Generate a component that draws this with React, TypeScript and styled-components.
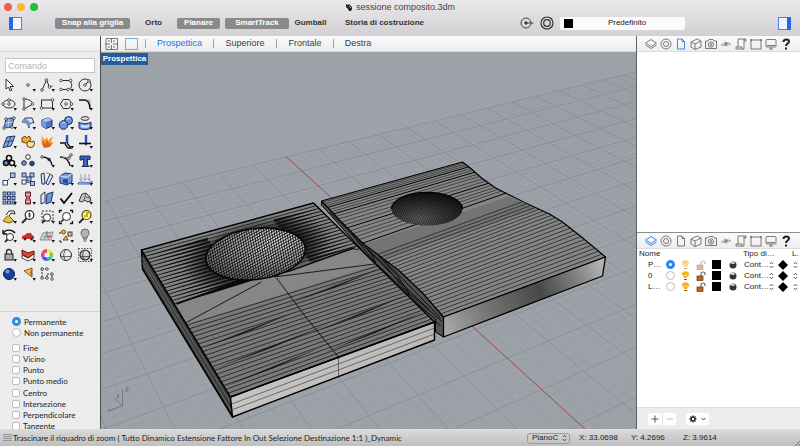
import React, { useState } from "react";
import styled, { createGlobalStyle, css } from "styled-components";

const GlobalStyle = createGlobalStyle`
  *, *::before, *::after { box-sizing: border-box; }
  html, body { margin: 0; padding: 0; }
  body, button, input, select, table {
    font-family: "Liberation Sans", Arial, Helvetica, sans-serif;
    font-size: 8px;
    line-height: 10px;
    color: #222;
  }
  button { border: 0; padding: 0; background: none; cursor: pointer; }
  svg { display: block; }
`;

/* ---------- window frame ---------- */

const Window = styled.div`
  display: flex;
  flex-direction: column;
  height: 100vh;
  min-height: 320px;
  overflow: hidden;
  background: #ececec;
`;

const Header = styled.header`
  flex: none;
  background: linear-gradient(#eae8ea, #d2d0d2);
`;

const TitleBar = styled.div`
  display: grid;
  grid-template-columns: 1fr auto 1fr;
  align-items: center;
  height: 14px;
  padding: 0 4px;
`;

const Lights = styled.div`
  display: flex;
  gap: 5px;
`;

const Light = styled.button<{ $color: string }>`
  width: 8px;
  height: 8px;
  border-radius: 50%;
  background: ${(p) => p.$color};
`;

const Title = styled.h1`
  display: flex;
  align-items: center;
  gap: 3px;
  margin: 0;
  font-size: 9px;
  font-weight: 400;
  color: #444;
`;

const Toolbar = styled.div`
  display: flex;
  align-items: center;
  height: 22px;
  padding: 0 9px 4px;
`;

const ModeGroup = styled.div`
  display: flex;
  flex: 1;
  gap: 5px;
  padding-left: 33px;
`;

const ModeButton = styled.button<{ $on?: boolean; $width: number }>`
  width: ${(p) => p.$width}px;
  height: 11px;
  border-radius: 2px;
  font-size: 8px;
  font-weight: 700;
  white-space: nowrap;
  color: #333;
  ${(p) => p.$on && css`
    color: #fff;
    background: #8b8a8b;
  `}
`;

const LayerPicker = styled.div`
  display: flex;
  align-items: center;
  gap: 6px;
  margin-right: 93px;
`;

const LayerField = styled.label`
  display: flex;
  align-items: center;
  width: 125px;
  height: 13px;
  padding: 0 4px;
  border-radius: 2px;
  background: #fbfbfb;
`;

const BareSelect = styled.select<{ $center?: boolean }>`
  appearance: none;
  flex: 1;
  min-width: 0;
  padding: 0;
  border: 0;
  background: none;
  outline: none;
  text-align: ${(p) => (p.$center ? "center" : "left")};
  text-align-last: ${(p) => (p.$center ? "center" : "left")};
`;

const Swatch = styled.span`
  display: block;
  width: 9px;
  height: 9px;
  background: #000;
`;

const Body = styled.main`
  display: grid;
  grid-template-columns: 100px minmax(0, 1fr) 163px;
  flex: 1;
  min-height: 0;
`;

/* ---------- left sidebar ---------- */

const Sidebar = styled.aside`
  display: flex;
  flex-direction: column;
  min-height: 0;
  overflow: hidden;
  background: #ececec;
`;

const StripSpacer = styled.div`
  flex: none;
  height: 16px;
  background: linear-gradient(#fbfbfb, #eeeeee);
  border-bottom: 1px solid #d6d6d6;
`;

const CommandInput = styled.input`
  flex: none;
  height: 15px;
  margin: 6px 5px 3px;
  padding: 0 2px;
  border: 1px solid #c6c6c6;
  border-radius: 0;
  background: #fff;
  font-size: 9px;
  outline: none;
  &::placeholder { color: #b4b4b4; }
`;

const ToolGrid = styled.div`
  flex: none;
  display: grid;
  grid-template-columns: repeat(5, 1fr);
  grid-auto-rows: 1fr;
  width: 94px;
  height: 207px;
`;

const ToolButton = styled.button`
  display: grid;
  place-items: center;
`;

const SnapPanel = styled.section`
  flex: 1;
  min-height: 0;
  margin-top: 28px;
  padding: 4px 0 0 12px;
  border-top: 1px solid #d4d4d4;
  overflow: hidden;
`;

const OptionGroup = styled.fieldset<{ $height: number }>`
  display: grid;
  grid-auto-rows: 1fr;
  height: ${(p) => p.$height}px;
  margin: 0 0 4px;
  padding: 0;
  border: 0;
`;

const OptionLabel = styled.label`
  display: flex;
  align-items: center;
  gap: 3px;
  font-family: Lato, "Liberation Sans", sans-serif;
  white-space: nowrap;
`;

const Radio = styled.input`
  appearance: none;
  width: 9px;
  height: 9px;
  margin: 0;
  border: 1px solid #bcbcbc;
  border-radius: 50%;
  background: #fff;
  &:checked {
    border: 3px solid #3087ee;
  }
`;

const Check = styled.input`
  appearance: none;
  width: 8px;
  height: 8px;
  margin: 0;
  border: 1px solid #bdbdbd;
  border-radius: 2px;
  background: #fff;
  &:checked { background: #3087ee; }
`;

/* ---------- viewport ---------- */

const ViewArea = styled.section`
  display: flex;
  flex-direction: column;
  min-width: 0;
  min-height: 0;
  border-left: 1px solid #4d4d4d;
  border-right: 1px solid #5d6062;
`;

const ViewTabs = styled.nav`
  flex: none;
  display: flex;
  align-items: center;
  height: 16px;
  padding-left: 4px;
  border-bottom: 1px solid #d9d9d9;
  background: linear-gradient(#fbfbfb, #ececec);
`;

const LayoutButton = styled.button`
  margin-right: 7px;
`;

const ViewTab = styled.button<{ $width: number; $active?: boolean }>`
  width: ${(p) => p.$width}px;
  height: 9px;
  border-left: 1px solid #a2a2a2;
  font-size: 9px;
  line-height: 9px;
  color: ${(p) => (p.$active ? "#2272e6" : "#3a3a3a")};
`;

const Canvas = styled.div`
  position: relative;
  flex: 1;
  min-height: 0;
  background: #9da2a9;
  overflow: hidden;
`;

const ViewLabel = styled.button`
  position: absolute;
  top: 1px;
  left: 0;
  width: 47px;
  height: 12px;
  background: #235c96;
  color: #fff;
  font-weight: 700;
`;

/* ---------- right panels ---------- */

const Panels = styled.aside`
  display: flex;
  flex-direction: column;
  min-height: 0;
  background: #fff;
`;

const Panel = styled.section`
  flex: 1;
  display: flex;
  flex-direction: column;
  min-height: 0;
  & + & { border-top: 1px solid #8e8e8e; }
`;

const PanelTabs = styled.nav`
  flex: none;
  display: flex;
  align-items: center;
  height: 16px;
  padding-left: 6px;
  border-bottom: 1px solid #dcdcdc;
  background: linear-gradient(#fafafa, #eeeeee);
`;

const PanelTab = styled.button<{ $active?: boolean }>`
  display: grid;
  place-items: center;
  width: 15px;
  height: 14px;
  color: ${(p) => (p.$active ? "#2a7bf0" : "#6b6b6b")};
`;

const LayerTable = styled.table`
  width: 100%;
  table-layout: fixed;
  border-collapse: collapse;
  th, td {
    height: 11px;
    padding: 0;
    font-weight: 400;
    text-align: left;
    white-space: nowrap;
  }
  th { height: 10px; padding-left: 2px; }
  td > svg, td > input, td > span { margin: 0 auto; }
  td > input { display: block; }
`;

const NameCell = styled.td`
  && { padding-left: 11px; }
`;

const TypeField = styled.label`
  display: flex;
  align-items: center;
  padding: 0 2px 0 3px;
`;

const PanelBody = styled.div`
  flex: 1;
  min-height: 0;
`;

const PanelFooter = styled.footer`
  flex: none;
  display: flex;
  align-items: center;
  gap: 10px;
  height: 22px;
  padding-left: 11px;
  border-top: 1px solid #dedede;
  background: #ececec;
`;

const Segment = styled.div`
  display: flex;
  border-radius: 2px;
  background: #fff;
`;

const SegmentButton = styled.button<{ $wide?: boolean }>`
  display: flex;
  align-items: center;
  justify-content: center;
  gap: 4px;
  width: ${(p) => (p.$wide ? 23 : 14)}px;
  height: 12px;
  & + & { border-left: 1px solid #e4e4e4; }
`;

/* ---------- status bar ---------- */

const StatusBar = styled.footer`
  flex: none;
  display: flex;
  align-items: center;
  height: 17px;
  padding-left: 3px;
  border-top: 1px solid #dedede;
  background: linear-gradient(#d9d9d9, #bfbfbf);
  white-space: nowrap;
`;

const Message = styled.span`
  flex: 1;
  min-width: 0;
  padding-left: 1px;
  overflow: hidden;
  font-family: Lato, "Liberation Sans", sans-serif;
`;

const PlaneField = styled.label`
  display: flex;
  align-items: center;
  width: 43px;
  height: 11px;
  padding: 0 2px 0 4px;
  margin-right: 9px;
  border: 1px solid #9b9b9b;
  border-radius: 3px;
`;

const Coordinate = styled.span`
  width: 52px;
`;

const Resizer = styled.span`
  display: flex;
  justify-content: flex-end;
  align-self: flex-end;
  width: 65px;
`;

/* ---------- scene geometry ---------- */

type Pt = [number, number];

const HORIZON = -255;
const VANISH_A: Pt = [-165, HORIZON];
const VANISH_B: Pt = [1980, HORIZON];
const BASE = 430;

const mix = (a: Pt, b: Pt, t: number): Pt => [a[0] + (b[0] - a[0]) * t, a[1] + (b[1] - a[1]) * t];

/* Point at fraction t of a polyline, measured by length. */
const along = (pts: Pt[], t: number): Pt => {
  const lengths = pts.slice(1).map((p, i) => Math.hypot(p[0] - pts[i][0], p[1] - pts[i][1]));
  let rest = t * lengths.reduce((a, b) => a + b, 0);
  for (let i = 0; i < lengths.length; i++) {
    if (rest <= lengths[i]) return mix(pts[i], pts[i + 1], rest / lengths[i]);
    rest -= lengths[i];
  }
  return pts[pts.length - 1];
};

const seg = (a: Pt, b: Pt) => `M${a[0].toFixed(1)} ${a[1].toFixed(1)}L${b[0].toFixed(1)} ${b[1].toFixed(1)}`;
const poly = (pts: Pt[]) => `M${pts.map((p) => p.map((n) => n.toFixed(1)).join(" ")).join("L")}Z`;

const FAR_POINT: Pt = [287, 157];
const FAR_SLOPE = (HORIZON - FAR_POINT[1]) / (VANISH_B[0] - FAR_POINT[0]);

const fromFarEdge = (k: number) => {
  const x = 586.5 + 68.5 * k;
  const m = (BASE - HORIZON) / (x - VANISH_A[0]);
  const fx = (FAR_POINT[1] - FAR_SLOPE * FAR_POINT[0] - HORIZON + m * VANISH_A[0]) / (m - FAR_SLOPE);
  return seg([fx, HORIZON + m * (fx - VANISH_A[0])], [x, BASE]);
};

const acrossGrid = (k: number) => seg([-835 + 117 * k, BASE], VANISH_B);

const range = (from: number, to: number) => Array.from({ length: to - from + 1 }, (_, i) => from + i);

const MINOR = [
  ...range(-45, 140).filter((i) => i % 5).map((i) => fromFarEdge(i / 5)),
  ...range(0, 105).filter((i) => i % 5).map((i) => acrossGrid(i / 5)),
].join("");
const MAJOR = [
  ...range(-9, 28).filter((i) => i !== 0).map(fromFarEdge),
  ...range(0, 21).map(acrossGrid),
].join("");

const A_LEFT: Pt[] = [[142, 250], [231, 397]];
const A_RIGHT: Pt[] = [[314, 203], [435, 322]];
const B_LEFT: Pt[] = [[322, 201], [341, 221], [362, 242], [379, 255], [400, 271], [424, 294], [444, 317]];
const B_RIGHT: Pt[] = [[463, 162], [472, 169], [482, 178], [496, 188], [510, 195], [524, 202], [537, 208], [550, 214], [563, 222], [582, 237], [606, 257]];

const bBack = [0.03, 0.07, 0.11, 0.2, 0.25, 0.36, 0.42, 0.49, 0.56, 0.7, 0.77, 0.84, 0.91].map((t) =>
  seg(along(B_LEFT, t * 0.35), along(B_RIGHT, t * 0.31))
).join("");
const bBold = [0.15, 0.3, 0.63, 1].map((t) => seg(along(B_LEFT, t * 0.35), along(B_RIGHT, t * 0.31))).join("");
const bFront = range(0, 21).map((i) => {
  const t = i / 22;
  return seg(along(B_LEFT, 0.46 + t * 0.54), along(B_RIGHT, 0.42 + t * 0.58));
}).join("");

const aBack = range(1, 17).map((i) => seg(along(A_LEFT, i * 0.0215), along(A_RIGHT, i * 0.0225))).join("");

/* Creases that swell as they run in to the rim of the bowl. */
const aCreases = range(2, 17).map((i) => {
  const l = along(A_LEFT, i * 0.0215);
  const r = along(A_RIGHT, i * 0.0225);
  const a = mix(l, r, 0.36);
  const b = mix(l, r, 0.74);
  const w = 1.6;
  return poly([l, [a[0], a[1] - w], [a[0], a[1] + w]]) + poly([r, [b[0], b[1] - w], [b[0], b[1] + w]]);
}).join("");

const aFront = range(0, 18).map((i) => {
  const t = i / 19;
  return seg(along(A_LEFT, 0.51 + t * 0.49), along(A_RIGHT, 0.53 + t * 0.47));
}).join("");

/* Long slivers where triangulated creases cross the front half. */
const aDark = ([[0.57, 0.5, 1], [0.66, 0, 0.5], [0.79, 0.5, 1], [0.8, 0, 0.6], [0.92, 0, 0.5], [0.93, 0.5, 1]] as number[][]).map(([t, from, to]) => {
  const l = along(A_LEFT, t);
  const r = along(A_RIGHT, t);
  const s = mix(l, r, from);
  const e = mix(l, r, to);
  const m = mix(s, e, 0.5);
  return poly([[s[0], s[1] + 2], [m[0], m[1] - 1], [e[0], e[1] - 3], [m[0], m[1] + 1]]);
}).join("");

const Scene = () => (
  <svg width="100%" height="100%" viewBox="101 52 536 377" preserveAspectRatio="xMidYMid slice" role="img" aria-label="Vista prospettica del modello">
    <defs>
      <linearGradient id="rim" gradientUnits="userSpaceOnUse" x1="444" y1="327" x2="604" y2="267">
        <stop offset="0" stopColor="#a8a8a8" />
        <stop offset="0.25" stopColor="#787878" />
        <stop offset="0.6" stopColor="#484848" />
        <stop offset="0.82" stopColor="#7e7e7e" />
        <stop offset="1" stopColor="#b4b4b4" />
      </linearGradient>
      <linearGradient id="front" x1="0" y1="1" x2="1" y2="0">
        <stop offset="0" stopColor="#c7c5c3" />
        <stop offset="1" stopColor="#bbb9b7" />
      </linearGradient>
      <radialGradient id="bowl" cx="0.7" cy="0.3" r="0.8">
        <stop offset="0" stopColor="#e8e8e8" />
        <stop offset="0.5" stopColor="#b4b4b4" />
        <stop offset="1" stopColor="#666" />
      </radialGradient>
      <radialGradient id="bowlDark" cx="0.4" cy="0.8" r="0.8">
        <stop offset="0" stopColor="#808080" />
        <stop offset="0.5" stopColor="#484848" />
        <stop offset="1" stopColor="#161616" />
      </radialGradient>
      <radialGradient id="halo">
        <stop offset="0.6" stopColor="#111" stopOpacity="0.85" />
        <stop offset="1" stopColor="#222" stopOpacity="0" />
      </radialGradient>
      <pattern id="mesh" width="2.6" height="2.6" patternUnits="userSpaceOnUse" patternTransform="rotate(-22) skewX(-18)">
        <path d="M0 .5H2.6M.5 0V2.6" stroke="#080808" strokeWidth=".8" />
      </pattern>
      <pattern id="meshFine" width="2" height="2" patternUnits="userSpaceOnUse" patternTransform="rotate(28)">
        <path d="M0 .5H2M.5 0V2" stroke="#000" strokeWidth=".45" />
      </pattern>
      <clipPath id="topA"><path d="M142 250L314 203L435 322L231 397Z" /></clipPath>
    </defs>

    <path d={MINOR} stroke="#90969f" strokeWidth=".5" opacity=".6" />
    <path d={MAJOR} stroke="#7c838c" strokeWidth=".7" opacity=".75" />
    <path d={fromFarEdge(0)} stroke="#a04650" strokeWidth="1" />

    {/* far slab */}
    <path d="M322 201L362 242L379 255L400 271L424 294L444 317L444 337L436 332L436 319L410 298L375 264L322 205Z" fill="#525252" stroke="#000" strokeWidth="1" />
    <path d="M352 234L376 263L412 297L441 326M362 243L386 266L406 290L442 321M368 248L376 262M379 256L398 276L409 292L408 301M384 260L416 292L441 318M330 212L362 244L380 262L430 310" fill="none" stroke="#080808" strokeWidth="1" />
    <path d={poly([...B_LEFT, ...[...B_RIGHT].reverse()])} fill="#858585" stroke="#000" strokeWidth="1.2" strokeLinejoin="round" />
    <path d="M365 244L511 196L537 209L386 258Z" fill="#747474" />
    <path d={bBack} stroke="#141414" strokeWidth=".6" />
    <path d={bBold} stroke="#000" strokeWidth="1" />
    <path d={bFront} stroke="#161616" strokeWidth=".7" />
    <path d="M444 317L606 257L603 276L444 337Z" fill="url(#rim)" stroke="#000" strokeWidth="1.3" strokeLinejoin="round" />
    <ellipse cx="427.5" cy="209" rx="35.5" ry="16.5" fill="url(#bowlDark)" />
    <ellipse cx="427.5" cy="209" rx="35.5" ry="16.5" fill="url(#meshFine)" />
    <path d="M392 209A35.5 16.5 0 0 1 463 209" fill="none" stroke="#050505" strokeWidth="1.4" />

    {/* near slab */}
    <path d="M142 250L143 269L233 417L231 397Z" fill="#3b3b3b" stroke="#000" strokeWidth="1.5" strokeLinejoin="round" />
    <path d="M142 257L232 404M143 263L232 411" stroke="#8a8a8a" strokeWidth=".6" />
    <path d="M142 250L314 203L435 322L231 397Z" fill="#828282" />
    <g clipPath="url(#topA)">
      <path d="M187 324L375 263L435 322L231 397Z" fill="#7a7a7a" />
      <path d={aBack} stroke="#101010" strokeWidth=".8" />
      <path d={aCreases} fill="#0a0a0a" opacity=".9" />
      <ellipse cx="257" cy="253" rx="76" ry="34" fill="url(#halo)" transform="rotate(-14 257 253)" />
      <path d="M177 303L246 279L310 266L356 247L354 251L310 263L277 279L250 283Z" fill="#090909" />
      <path d="M178 304L354 249L378 264L187 325Z" fill="#868686" />
      <path d="M177 304L240 281L290 271L354 248" fill="none" stroke="#0a0a0a" strokeWidth="1.6" />
      <path d={aFront} stroke="#111" strokeWidth=".75" />
      <path d={aDark} fill="#0b0b0b" opacity=".8" />
      <path d="M262 282L186 323M275 277L375 264M277 278L307 318L339 357" fill="none" stroke="#0c0c0c" strokeWidth=".9" />
    </g>
    <ellipse cx="256" cy="254" rx="50" ry="25.5" fill="url(#bowl)" transform="rotate(-7 256 254)" />
    <ellipse cx="256" cy="254" rx="50" ry="25.5" fill="url(#mesh)" stroke="#050505" strokeWidth="1.5" transform="rotate(-7 256 254)" />
    <path d="M231 397L435 322L435 340L233 417Z" fill="url(#front)" stroke="#000" strokeWidth="1.4" strokeLinejoin="round" />
    <path d="M232 404L435 328M232 410L435 334M339 357V376" stroke="#444" strokeWidth=".7" />
    <path d="M142 250L314 203L435 322L231 397Z" fill="none" stroke="#000" strokeWidth="1.4" strokeLinejoin="round" />

    {/* axis marker */}
    <g fill="none" stroke="#6b7078" strokeWidth=".8">
      <path d="M123 406V390M123 406L115 398M123 406L108 411M109 409L111 412M126 388H129L126 391H129M117 395L120 397M119 394L118 398" />
    </g>
  </svg>
);

/* ---------- icon drawings ---------- */

const K = "#2c2c2c";
const BL = "#6f93dc";
const corner = <path d="M12.5 12H16L14.2 14.8Z" fill="#111" />;
const dot = (x: number, y: number, fill = "#fff") => (
  <circle key={`${x}-${y}`} cx={x} cy={y} r="1.3" fill={fill} stroke={K} strokeWidth=".8" />
);
const sq = (x: number, y: number, s = 4, fill = "#a9c0ee") => (
  <rect key={`${x}-${y}`} x={x} y={y} width={s} height={s} fill={fill} stroke="#23345f" strokeWidth=".9" />
);

const TOOLS: [string, React.ReactNode][] = [
  ["Seleziona", <path d="M5 2V12L7.5 10L9 14L10.8 13.2L9.2 9.5H12.5Z" fill="#fff" stroke={K} />],
  ["Punto", <>{dot(8, 8)}{corner}</>],
  ["Polilinea", <><path d="M3 13L7.5 3L10.5 10L13.5 9" fill="none" stroke={K} />{dot(3, 13)}{dot(7.5, 3)}{dot(10.5, 10)}{corner}</>],
  ["Curva", <><path d="M3 3.5H10C15 3.5 15 12.5 10 12.5H3" fill="none" stroke={K} />{dot(3, 3.5)}{dot(12.5, 3.5)}{dot(3, 12.5)}{dot(10, 12.5)}{corner}</>],
  ["Cerchio", <><circle cx="8" cy="8" r="6" fill="none" stroke={K} /><path d="M8 8L12 4" stroke={K} />{dot(8, 8)}{dot(12, 4)}{corner}</>],
  ["Ellisse", <><ellipse cx="8" cy="8" rx="6" ry="4" fill="none" stroke={K} />{dot(8, 8)}{dot(2, 8)}{dot(8, 4)}{corner}</>],
  ["Arco", <><path d="M4 3C9 3 12 5 13 8L4 13V3" fill="none" stroke={K} />{dot(4, 3)}{dot(4, 13)}{dot(12.5, 8)}{corner}</>],
  ["Rettangolo", <><rect x="2.5" y="4" width="11" height="8" fill="none" stroke={K} />{dot(2.5, 12)}{dot(13.5, 4)}{corner}</>],
  ["Poligono", <><path d="M5 3.5H11L14 8L11 12.5H5L2.5 8Z" fill="none" stroke={K} />{dot(8, 8)}{dot(13.5, 8)}{corner}</>],
  ["Raccorda", <><path d="M2 4H7C11 4 13 7 13 13" fill="none" stroke="#111" strokeWidth="1.6" /><path d="M9 4H13V7" fill="none" stroke="#999" strokeWidth=".8" />{corner}</>],
  ["Superficie da punti", <><path d="M5 4L13 2.5L11 12L3 13Z" fill={BL} stroke="#24345c" /><path d="M8 3.5L7 12.5M4 8.5L12 7" stroke="#dbe6ff" strokeWidth=".7" />{dot(5, 4)}{dot(13, 3)}{dot(3, 13)}{dot(11, 12)}{corner}</>],
  ["Superficie piegata", <><path d="M2 7L5 3H12L14 8C11 7 9 9 9 13C8 9 6 7 2 7Z" fill="#dfe7f7" stroke="#24345c" /><path d="M9 13C8 9 6 7 2 7L4 4C8 4 10 6 10 9Z" fill={BL} />{corner}</>],
  ["Parallelepipedo", <><path d="M3 5L9 3L13 5V11L7 13.5L3 11Z" fill="#4d73cb" stroke="#1c2d62" /><path d="M3 5L7 7L13 5L9 3Z" fill="#b7caf5" /><path d="M7 7V13.5L3 11V5Z" fill="#7999e2" />{corner}</>],
  ["Unione booleana", <><circle cx="10.5" cy="5.5" r="4" fill={BL} stroke="#172a5d" /><circle cx="5.5" cy="10" r="4.3" fill={BL} stroke="#172a5d" /><path d="M4 8.5A2 2 0 0 1 7 8M9 4.5A2 2 0 0 1 12 4" fill="none" stroke="#e2ebff" />{corner}</>],
  ["Estrudi superficie", <><ellipse cx="8" cy="3.5" rx="4" ry="1.8" fill="none" stroke={K} /><path d="M2 7C4 9 12 9 14 7V13C12 15 4 15 2 13Z" fill={BL} stroke="#1d3060" /><path d="M4 9.5C6 11 10 11 12 9.5V12C10 13 6 13 4 12Z" fill="#dce7ff" />{corner}</>],
  ["Rete di superfici", <><path d="M6 3L14 2L10 12L2 13.5Z" fill="#8aa6e5" stroke="#1e3060" /><path d="M10 2.5L6 12.5M4.5 8L12.5 6.5" stroke="#1e3060" strokeWidth=".8" />{corner}</>],
  ["Impostazioni blocco", <><path d="M2 4L5 2L7 4L9 2L11 5L9 8L6 9L2 8Z" fill="#f5a72a" stroke="#684510" /><path d="M7 9L9 7L12 8L14 7L14.5 10L13 13L10 13.5L7 12Z" fill="#fbe29a" stroke="#684510" /></>],
  ["Esplodi", <><path d="M2 2L6 6L8 3L9 7L14 2L11.5 9L15 8L11 13H5L1.5 9L5 10Z" fill="#f6941e" /><path d="M5 14L2 5L6.5 10L8.5 6L10 10L13 8L10.5 13Z" fill="#e0601f" /></>],
  ["Taglia", <><path d="M9 1V9" stroke="#2c55b8" strokeWidth="2.5" /><path d="M2 9H8M9 9L13 14L10 14L7 10" fill="#fff" stroke="#111" strokeWidth="1.3" />{corner}</>],
  ["Dividi", <><path d="M9 1V9" stroke="#2c55b8" strokeWidth="2.5" /><path d="M2 9.5H14" stroke="#111" strokeWidth="1.6" /><path d="M8 10L10 10L9 12Z" fill="#111" />{corner}</>],
  ["Raggruppa", <><circle cx="8" cy="5" r="2.5" fill="#fff" stroke="#111" strokeWidth="1.6" /><circle cx="5" cy="10" r="2.5" fill={BL} stroke="#111" strokeWidth="1.6" /><circle cx="11" cy="10" r="2.5" fill="#fff" stroke="#111" strokeWidth="1.6" />{corner}</>],
  ["Separa gruppo", <><circle cx="8" cy="4" r="2.3" fill="#fff" stroke={K} /><circle cx="4" cy="10" r="2.3" fill={BL} stroke={K} /><circle cx="12" cy="10.5" r="2.3" fill="#1e489f" stroke={K} /></>],
  ["Modifica punti", <><path d="M3 4C8 4 12 7 13 12" fill="none" stroke="#111" strokeWidth="1.3" />{dot(3, 4)}{dot(10, 6.5, "#222")}{corner}</>],
  ["Punti di controllo", <><path d="M2 4C8 4 11 8 12 13" fill="none" stroke="#111" strokeWidth="1.3" /><path d="M3 4L11 5L13 2" fill="none" stroke="#777" />{dot(11, 5)}{dot(13, 2)}{corner}</>],
  ["Testo", <><path d="M3 3H13V6.5H11.5L10.5 5.5V12L12 13.5H5L6.5 12V5.5L5 7H3Z" fill="#3d63b6" stroke="#1b2d60" />{corner}</>],
  ["Sposta", <><path d="M5 11L11 5" stroke={K} strokeDasharray="2 1" />{sq(2, 9.5, 4.5, "#fff")}{sq(9.5, 2, 4.5)}{corner}</>],
  ["Copia", <><path d="M5 11L11 4M5 11L11 12M5 4L11 11" stroke={K} strokeWidth=".7" />{sq(2, 9, 4, "#fff")}{sq(10, 2)}{sq(2, 2)}{sq(10.5, 10.5)}{sq(7, 6)}</>],
  ["Ruota", <><path d="M2 3L5 2L6 13L3 13ZM7 12L11 3L14 5L9 14Z" fill="#d9e3f9" stroke="#23345f" /><path d="M7 2Q11 2 13 4" fill="none" stroke="#c47d22" />{corner}</>],
  ["Scala", <><path d="M2 5L7 2L14 3V11L9 14L2 12Z" fill="#7999dd" stroke="#20336a" /><path d="M5 8H10V13L5 12Z" fill="#2850ab" /><path d="M2 5L9 6L14 3" fill="none" stroke="#dae5ff" />{corner}</>],
  ["Allinea", <><path d="M1 12C5 9 10 14 15 10V13H1Z" fill="#b6caf2" stroke="#4769b6" /><path d="M4 3V9M8 3V9M12 3V9M2.5 7.5L4 9.5L5.5 7.5M6.5 7.5L8 9.5L9.5 7.5M10.5 7.5L12 9.5L13.5 7.5" fill="none" stroke="#7589b5" strokeWidth=".8" />{corner}</>],
  ["Serie", <>{[2, 6.5, 11].flatMap((x) => [2, 6.5, 11].map((y) => sq(x, y, 3)))}{corner}</>],
  ["Torsione", <><path d="M5.5 2H10.5V6L9 8L10.5 10V14H5.5V10L7 8L5.5 6Z" fill="#c9736e" stroke="#612321" /><path d="M6 4.5H10M6 11.5H10" stroke="#f3c4c1" />{corner}</>],
  ["Rispecchia", <><path d="M2 5L6 2V12L2 14Z" fill="#dfe7f9" stroke="#23345f" /><path d="M8 4L14 2L12 12L7 14Z" fill={BL} stroke="#23345f" />{corner}</>],
  ["Controlla", <><path d="M2.5 8.5L6 13L14 3" fill="none" stroke="#0c0c0c" strokeWidth="1.9" />{corner}</>],
  ["Solidi", <><path d="M2 11L5 4L9 3L13 7L14 11L10 12L8 10L5 12Z" fill="#c6c6c6" stroke="#333" /><path d="M9 3L7 10M9 7L13 8" stroke="#555" fill="none" />{corner}</>],
  ["Sposta vista", <><path d="M2 12L7 6L13 12L8 14Z" fill="#e8bd42" stroke="#765a12" /><path d="M5 6L8 2H13L14 5L10 4L8 7" fill="#fff" stroke="#222" />{corner}</>],
  ["Zoom dinamico", <><circle cx="9.5" cy="6" r="4.3" fill="#fff" stroke={K} strokeWidth="1.2" /><path d="M6.5 9.5L2 14" stroke={K} strokeWidth="2" /><path d="M9.5 3.5V8.5M8 5H11M8 7H11" stroke={K} strokeWidth=".8" /></>],
  ["Zoom finestra", <><rect x="3" y="2" width="11" height="10" fill="none" stroke={K} strokeDasharray="2 1.5" /><circle cx="8" cy="8.5" r="3.6" fill="#fff" stroke={K} /><path d="M5.5 11.5L3 14" stroke={K} strokeWidth="1.8" />{corner}</>],
  ["Zoom estensione", <><circle cx="8.5" cy="7.5" r="4" fill="#fff" stroke={K} /><path d="M5.5 10.5L3 13" stroke={K} strokeWidth="1.7" /><path d="M1.5 4V1.5H4M12 1.5H14.5V4M14.5 12V14.5H12M4 14.5H1.5V12" fill="none" stroke="#111" strokeWidth="1.3" /></>],
  ["Zoom selezione", <><circle cx="9.5" cy="6" r="4.5" fill="#fff59a" stroke="#4a4514" strokeWidth="1.2" /><path d="M7 7H10V4H12" fill="none" stroke="#d6a719" strokeWidth="2" /><path d="M6.5 9.5L2 14" stroke={K} strokeWidth="2" />{corner}</>],
  ["Annulla vista", <><path d="M2 6C4 1 11 1 14 5M2 6L6 6M2 6V2" fill="none" stroke="#111" strokeWidth="1.4" /><circle cx="9" cy="9" r="3.5" fill="#fff" stroke={K} /><path d="M6.5 11.5L4 14" stroke={K} strokeWidth="1.8" />{corner}</>],
  ["Vista automobile", <><path d="M2 8L5 7L7 5H11L12 7L14 8V11H2Z" fill="#d72c24" /><circle cx="5" cy="11" r="1.4" fill="#333" /><circle cx="11.5" cy="11" r="1.4" fill="#333" />{corner}</>],
  ["Piano di costruzione", <><path d="M4 5L14 4L12 12L1 12Z" fill="#d4d4d4" stroke="#777" strokeWidth=".8" /><path d="M4 9H13M7 5L5 12M11 5L9 12" stroke="#888" strokeWidth=".7" /><path d="M8 9V3" stroke="#338f45" /><path d="M8 9L12 8" stroke="#c33" />{corner}</>],
  ["Oggetti", <><path d="M2 6V4M2 12V14H4" stroke="#222" fill="none" /><circle cx="5.5" cy="4" r="2" fill="#f5be3a" stroke="#6b5014" />{sq(10, 4, 4, "#f5be3a")}<path d="M5 12L8 8L10 12Z" fill="#f5be3a" stroke="#6b5014" />{corner}</>],
  ["Luce", <><path d="M6 10C6 8 4 7 4 5A4 4 0 0 1 12 5C12 7 10 8 10 10Z" fill="#b5b5b5" stroke="#656565" /><path d="M6 11H10M6.5 13H9.5" stroke="#555" />{corner}</>],
  ["Blocca", <><path d="M5.5 7V5A2.5 2.5 0 0 1 10.5 5V7" fill="none" stroke={K} strokeWidth="1.3" /><rect x="4" y="7" width="8" height="6" fill="#a9a9a9" stroke="#222" />{corner}</>],
  ["Livelli", <><path d="M2 8L8 11L14 6V11L8 14L2 11Z" fill="#fff" stroke="#444" /><path d="M2 3L8 6L14 4V7L8 11L2 7Z" fill="#d94a30" stroke="#60130f" />{corner}</>],
  ["Colori", <><path d="M8 8V2A6 6 0 0 1 13.2 5Z" fill="#fde43c" /><path d="M8 8L13.2 5A6 6 0 0 1 13.2 11Z" fill="#6fcf43" /><path d="M8 8L13.2 11A6 6 0 0 1 8 14Z" fill="#25b7cf" /><path d="M8 8V14A6 6 0 0 1 2.8 11Z" fill="#3b56dd" /><path d="M8 8L2.8 11A6 6 0 0 1 2.8 5Z" fill="#d43fc4" /><path d="M8 8L2.8 5A6 6 0 0 1 8 2Z" fill="#f04a34" /><circle cx="8" cy="8" r="2.5" fill="#f5f5f5" />{corner}</>],
  ["Ombreggia", <><circle cx="8" cy="8" r="5.5" fill="#ededed" stroke={K} /><path d="M8 2.5C5 5 5 11 8 13.5M2.5 9C5 10 11 10 13.5 9" fill="none" stroke={K} strokeWidth=".8" /></>],
  ["Ombreggia selezione", <><rect x="1.5" y="1.5" width="13" height="13" fill="none" stroke={K} strokeDasharray="1.5 1.3" strokeWidth=".8" /><circle cx="8" cy="8" r="5" fill="#d7d7d7" stroke={K} strokeWidth="1.2" /><path d="M8 3C5 5 5 11 8 13M3 9C5 10 11 10 13 9" fill="none" stroke={K} strokeWidth=".8" />{corner}</>],
  ["Renderizza", <><circle cx="8" cy="8" r="5.5" fill="#183f9d" stroke="#0b1d4d" /><circle cx="6.5" cy="5.5" r="2" fill="#719be9" />{corner}</>],
  ["Quota", <><path d="M4 5L12 2V11Z" fill="#f2bd5a" stroke="#8c5a1b" /><path d="M12 2V11L10 7Z" fill="#a9592b" />{corner}</>],
  ["Catena punti", <><path d="M3 3V12M3 3H8M3 12H8V8H13V13" fill="none" stroke={K} strokeDasharray="2 1" />{dot(3, 3)}{dot(8, 3)}{dot(3, 12)}{dot(8, 12)}{dot(13, 8)}{dot(13, 13)}</>],
];

const PANEL_ICONS: [string, React.ReactNode][] = [
  ["Livelli", <path d="M1.5 6L7 2.5L12.5 6L7 9.5ZM1.5 8L7 11.5L12.5 8" />],
  ["Oggetto", <><circle cx="7" cy="7" r="5" /><circle cx="7" cy="7" r="2.5" /></>],
  ["Documento", <path d="M3.5 2H8L10.5 4.5V12H3.5ZM8 2V4.5H10.5" />],
  ["Blocchi", <path d="M2 5L8 2L12 4V10L6 12.5L2 10ZM2 5L6 7L12 4M6 7V12.5" />],
  ["Fotocamera", <><path d="M1.5 4H4L5 2.5H9L10 4H12.5V11.5H1.5Z" /><circle cx="7" cy="7.5" r="2.7" /><circle cx="7" cy="7.5" r="1" /></>],
  ["Visualizza", <><path d="M2 8L6 5L12 7L8 9ZM4 8L10 6" opacity=".5" /><circle cx="7" cy="7" r="1.2" fill="currentColor" opacity=".8" /></>],
  ["Note", <path d="M4 2H12V4H10V12H2V10H4ZM4 10H8V12M10 2V4" />],
  ["Area", <><rect x="2" y="3" width="10" height="9" /><path d="M1 3H3M11 3H13M2 2V4M12 2V4" /></>],
  ["Schermo", <><rect x="2" y="2.5" width="10" height="7.5" rx="1" /><path d="M3 8.5H11M5 12H9M7 10V12" /></>],
];

const SMALL = { fill: "none", stroke: "currentColor", strokeWidth: 0.9 };

const PanelTabBar = ({ active }: { active: string }) => (
  <PanelTabs>
    {PANEL_ICONS.map(([name, art]) => (
      <PanelTab key={name} aria-label={name} $active={name === active}>
        <svg width="14" height="14" viewBox="0 0 14 14" {...SMALL}>{art}</svg>
      </PanelTab>
    ))}
    <PanelTab aria-label="Aiuto">
      <svg width="14" height="14" viewBox="0 0 14 14" fill="none" stroke="#222" strokeWidth="2">
        <path d="M4.5 5C4.5 1.5 10 2 10 4.5C10 6.5 7 6.5 7 9M7 10.5V12.5" />
      </svg>
    </PanelTab>
  </PanelTabs>
);

const Steppers = () => (
  <svg width="5" height="8" viewBox="0 0 5 8" fill="none" stroke="#444" strokeWidth=".9">
    <path d="M.8 3L2.5 1.2L4.2 3M.8 5L2.5 6.8L4.2 5" />
  </svg>
);

const SidebarIcon = ({ right }: { right?: boolean }) => (
  <svg width="13" height="13" viewBox="0 0 13 13">
    <rect x=".5" y=".5" width="12" height="12" fill="#f1f3f8" stroke="#4284ea" />
    <rect x={right ? 9 : 0} y="0" width="4" height="13" fill="#1e6ce4" />
  </svg>
);

const MODES: [string, boolean, number][] = [
  ["Snap alla griglia", true, 75],
  ["Orto", false, 37],
  ["Planare", true, 43],
  ["SmartTrack", true, 64],
  ["Gumball", false, 33],
  ["Storia di costruzione", false, 105],
];

const VIEWS: [string, number][] = [["Prospettica", 68], ["Superiore", 63], ["Frontale", 57], ["Destra", 49]];
const SNAPS = ["Fine", "Vicino", "Punto", "Punto medio", "Centro", "Intersezione", "Perpendicolare", "Tangente"];
const LAYERS = ["P…", "0", "L…"];
const COLUMNS = [25, 16, 15, 15, 16, 17, 35, 14, 10];

export default function App() {
  const [view, setView] = useState("Prospettica");
  const [modes, setModes] = useState(() => MODES.map((m) => m[1]));
  const [persistent, setPersistent] = useState(true);
  const [layer, setLayer] = useState(0);

  return (
    <Window>
      <GlobalStyle />
      <Header>
        <TitleBar>
          <Lights>
            <Light $color="#f05b55" aria-label="Chiudi" />
            <Light $color="#f7b92e" aria-label="Riduci" />
            <Light $color="#25bd3c" aria-label="Ingrandisci" />
          </Lights>
          <Title>
            <svg width="8" height="9" viewBox="0 0 8 9">
              <path d="M1 1L3 2L4 1L7 4V6L6 8H4L3 6L1 4Z" fill="#222" />
              <path d="M1 5L3 7M4 3L6 5" stroke="#fff" strokeWidth=".7" />
            </svg>
            sessione composito.3dm
          </Title>
        </TitleBar>
        <Toolbar>
          <button aria-label="Barra sinistra"><SidebarIcon /></button>
          <ModeGroup>
            {MODES.map(([name, , width], i) => (
              <ModeButton
                key={name}
                $on={modes[i]}
                $width={width}
                aria-pressed={modes[i]}
                onClick={() => setModes(modes.map((m, j) => (j === i ? !m : m)))}
              >
                {name}
              </ModeButton>
            ))}
          </ModeGroup>
          <LayerPicker>
            <button aria-label="Registra storia">
              <svg width="14" height="12" viewBox="0 0 14 12" fill="none" stroke="#444">
                <circle cx="6" cy="6" r="5" /><circle cx="6" cy="6" r="1.2" fill="#222" /><path d="M6 6H13.5" />
              </svg>
            </button>
            <button aria-label="Bersaglio">
              <svg width="14" height="14" viewBox="0 0 14 14" fill="none" stroke="#333" strokeWidth="1.2">
                <circle cx="7" cy="7" r="6" /><circle cx="7" cy="7" r="3.3" />
              </svg>
            </button>
            <LayerField>
              <Swatch />
              <BareSelect $center aria-label="Livello corrente"><option>Predefinito</option></BareSelect>
            </LayerField>
          </LayerPicker>
          <button aria-label="Barra destra"><SidebarIcon right /></button>
        </Toolbar>
      </Header>

      <Body>
        <Sidebar>
          <StripSpacer />
          <CommandInput placeholder="Comando" aria-label="Comando" />
          <ToolGrid>
            {TOOLS.map(([name, art]) => (
              <ToolButton key={name} aria-label={name}>
                <svg width="16" height="16" viewBox="0 0 16 16">{art}</svg>
              </ToolButton>
            ))}
          </ToolGrid>
          <SnapPanel>
            <OptionGroup $height={22} aria-label="Durata snap">
              <OptionLabel>
                <Radio type="radio" name="durata" checked={persistent} onChange={() => setPersistent(true)} />Permanente
              </OptionLabel>
              <OptionLabel>
                <Radio type="radio" name="durata" checked={!persistent} onChange={() => setPersistent(false)} />Non permanente
              </OptionLabel>
            </OptionGroup>
            <OptionGroup $height={90} aria-label="Snap agli oggetti">
              {SNAPS.map((name) => (
                <OptionLabel key={name}><Check type="checkbox" />{name}</OptionLabel>
              ))}
            </OptionGroup>
          </SnapPanel>
        </Sidebar>

        <ViewArea>
          <ViewTabs>
            <LayoutButton aria-label="Quattro viste">
              <svg width="13" height="12" viewBox="0 0 13 12" fill="none" stroke="#555">
                <path d="M1 .5H12.5V11.5H1ZM6.5 0V5M6.5 7V12M0 6H5M8 6H13M3 3H5M8 3H10M3 9H5M8 9H10" strokeWidth=".8" />
              </svg>
            </LayoutButton>
            <LayoutButton aria-label="Vista singola">
              <svg width="13" height="12" viewBox="0 0 13 12"><rect x=".5" y=".5" width="12" height="11" fill="none" stroke="#78a8ee" /></svg>
            </LayoutButton>
            {VIEWS.map(([name, width]) => (
              <ViewTab key={name} $width={width} $active={view === name} onClick={() => setView(name)}>{name}</ViewTab>
            ))}
          </ViewTabs>
          <Canvas>
            <Scene />
            <ViewLabel>{view}</ViewLabel>
          </Canvas>
        </ViewArea>

        <Panels>
          <Panel>
            <PanelTabBar active="Documento" />
            <PanelBody />
          </Panel>
          <Panel>
            <PanelTabBar active="Livelli" />
            <PanelBody>
              <LayerTable>
                <colgroup>{COLUMNS.map((w, i) => <col key={i} width={w} />)}</colgroup>
                <thead>
                  <tr><th>Nome</th><th /><th /><th /><th /><th /><th colSpan={2}>Tipo di…</th><th>L.</th></tr>
                </thead>
                <tbody>
                  {LAYERS.map((name, i) => (
                    <tr key={name}>
                      <NameCell>{name}</NameCell>
                      <td><Radio type="radio" name="livello" aria-label={`Attiva ${name}`} checked={layer === i} onChange={() => setLayer(i)} /></td>
                      <td>
                        <svg width="9" height="10" viewBox="0 0 9 10" opacity={layer === i ? 0.55 : 1}>
                          <path d="M3 7C3 5 1 5 1 3A3.5 2.8 0 0 1 8 3C8 5 6 5 6 7Z" fill="#f8ae1d" />
                          <path d="M3 3.5L4.5 5L6 3.5" stroke="#fff2a9" fill="none" /><path d="M3 8.5H6" stroke="#8a6224" />
                        </svg>
                      </td>
                      <td>
                        <svg width="10" height="10" viewBox="0 0 10 10" opacity={layer === i ? 0.45 : 1}>
                          <rect x="1" y="5" width="6" height="4.5" fill="#b66625" stroke="#673711" strokeWidth=".7" />
                          <path d="M5 5V3A2 2 0 0 1 9 3V4" fill="none" stroke="#666" strokeWidth="1.2" />
                        </svg>
                      </td>
                      <td><Swatch /></td>
                      <td>
                        <svg width="8" height="8" viewBox="0 0 8 8">
                          <circle cx="4" cy="4" r="3.5" fill="#333" /><path d="M1 2.5A3 3 0 0 1 5 1L6 3Z" fill="#ddd" />
                        </svg>
                      </td>
                      <td>
                        <TypeField>
                          <BareSelect aria-label={`Tipo di linea ${name}`}><option>Cont…</option></BareSelect>
                          <Steppers />
                        </TypeField>
                      </td>
                      <td><svg width="10" height="10" viewBox="0 0 10 10"><path d="M5 0L10 5L5 10L0 5Z" fill="#000" /></svg></td>
                      <td><Steppers /></td>
                    </tr>
                  ))}
                </tbody>
              </LayerTable>
            </PanelBody>
            <PanelFooter>
              <Segment>
                <SegmentButton aria-label="Aggiungi livello">
                  <svg width="8" height="8" viewBox="0 0 8 8"><path d="M4 .5V7.5M.5 4H7.5" stroke="#555" /></svg>
                </SegmentButton>
                <SegmentButton aria-label="Rimuovi livello">
                  <svg width="8" height="8" viewBox="0 0 8 8"><path d="M1 4H7" stroke="#bbb" /></svg>
                </SegmentButton>
              </Segment>
              <Segment>
                <SegmentButton $wide aria-label="Azioni">
                  <svg width="8" height="8" viewBox="0 0 8 8" fill="none" stroke="#222">
                    <circle cx="4" cy="4" r="2" strokeWidth="1.6" />
                    <path d="M4 .3V2M4 6V7.7M.3 4H2M6 4H7.7M1.4 1.4L2.5 2.5M5.5 5.5L6.6 6.6M1.4 6.6L2.5 5.5M5.5 2.5L6.6 1.4" />
                  </svg>
                  <svg width="5" height="4" viewBox="0 0 5 4"><path d="M.5 1L2.5 3L4.5 1" fill="none" stroke="#444" /></svg>
                </SegmentButton>
              </Segment>
            </PanelFooter>
          </Panel>
        </Panels>
      </Body>

      <StatusBar>
        <svg width="9" height="8" viewBox="0 0 9 8"><path d="M0 .5H9M0 2.5H9M0 4.5H9M0 6.5H9" stroke="#949494" /></svg>
        <Message>Trascinare il riquadro di zoom ( Tutto Dinamico Estensione Fattore In Out Selezione Destinazione 1:1 )_Dynamic</Message>
        <PlaneField>
          <BareSelect aria-label="Piano"><option>PianoC</option></BareSelect>
          <Steppers />
        </PlaneField>
        <Coordinate>X: 33.0698</Coordinate>
        <Coordinate>Y: 4.2696</Coordinate>
        <Coordinate>Z: 3.9614</Coordinate>
        <Resizer><svg width="5" height="5" viewBox="0 0 5 5"><path d="M0 5L5 0M3 5L5 3" stroke="#777" /></svg></Resizer>
      </StatusBar>
    </Window>
  );
}
